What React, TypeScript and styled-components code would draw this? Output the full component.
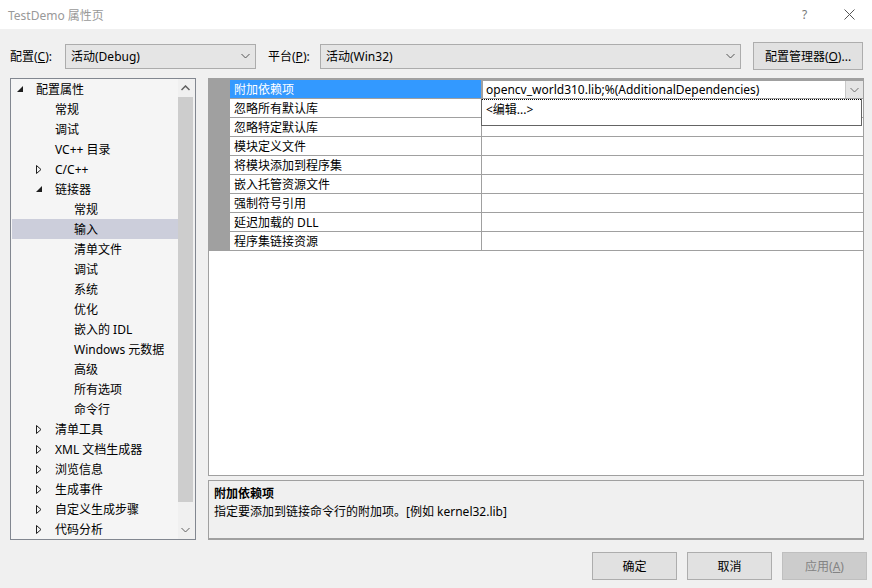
import React from 'react';
import styled, { createGlobalStyle } from 'styled-components';

const GlobalStyle = createGlobalStyle`
  html, body {
    margin: 0;
    padding: 0;
    background: #f0f0f0;
  }
  body {
    font-family: "Noto Sans", "Noto Sans CJK SC", sans-serif;
    font-size: 12px;
    color: #000;
  }
`;

const Window = styled.div`
  width: 872px;
  height: 588px;
  display: flex;
  flex-direction: column;
  background: #f0f0f0;
  overflow: hidden;
`;

const TitleBar = styled.div`
  height: 29px;
  background: #fff;
  display: flex;
  align-items: center;
  padding-left: 8px;
  color: #999;
  font-size: 12px;
`;

const TitleText = styled.div`
  flex: 1;
`;

const TitleButton = styled.div`
  width: 45px;
  height: 29px;
  display: flex;
  align-items: center;
  justify-content: center;
  color: #777;
`;

const Toolbar = styled.div`
  display: flex;
  align-items: center;
  height: 28px;
  margin-top: 13px;
  padding-left: 10px;
`;

const Label = styled.span<{ $width: number }>`
  width: ${({ $width }) => $width}px;
  white-space: nowrap;
`;

const Combo = styled.div<{ $width: number }>`
  width: ${({ $width }) => $width}px;
  height: 25px;
  box-sizing: border-box;
  border: 1px solid #acacac;
  background: #e5e5e5;
  display: flex;
  align-items: center;
  padding: 0 5px;
  margin-right: 12px;
`;

const ComboText = styled.span`
  flex: 1;
`;

const Button = styled.div<{ $width: number; $disabled?: boolean }>`
  width: ${({ $width }) => $width}px;
  height: 28px;
  box-sizing: border-box;
  border: 1px solid ${({ $disabled }) => ($disabled ? '#bfbfbf' : '#adadad')};
  background: ${({ $disabled }) => ($disabled ? '#cccccc' : '#e1e1e1')};
  color: ${({ $disabled }) => ($disabled ? '#838383' : '#000')};
  display: flex;
  align-items: center;
  justify-content: center;
`;

const Main = styled.div`
  display: flex;
  margin-top: 8px;
  height: 462px;
`;

const TreePanel = styled.div`
  width: 186px;
  margin-left: 10px;
  box-sizing: border-box;
  border: 1px solid #828790;
  background: #f5f5f5;
  display: flex;
`;

const TreeList = styled.div`
  flex: 1;
  display: flex;
  flex-direction: column;
`;

const TreeRow = styled.div<{ $level: number; $selected?: boolean }>`
  height: 20px;
  display: flex;
  align-items: center;
  margin-left: 1px;
  padding-left: ${({ $level }) => 5 + $level * 19}px;
  background: ${({ $selected }) => ($selected ? '#cccedb' : 'transparent')};
  white-space: nowrap;
`;

const Expander = styled.span`
  width: 19px;
  height: 20px;
  display: flex;
  align-items: center;
`;

const ScrollBar = styled.div`
  width: 17px;
  background: #f0f0f0;
  display: flex;
  flex-direction: column;
  align-items: flex-start;
`;

const ScrollArrow = styled.div`
  width: 15px;
  height: 18px;
  display: flex;
  align-items: center;
  justify-content: center;
`;

const ScrollTrack = styled.div`
  flex: 1;
  width: 15px;
  display: flex;
  flex-direction: column;
`;

const ScrollThumb = styled.div`
  height: 405px;
  background: #cdcdcd;
`;

const RightColumn = styled.div`
  width: 656px;
  margin-left: 12px;
  display: flex;
  flex-direction: column;
`;

const Grid = styled.div`
  height: 398px;
  box-sizing: border-box;
  border: 1px solid #a0a0a0;
  border-top-width: 2px;
  background: #fff;
  position: relative;
`;

const GridRow = styled.div`
  display: grid;
  grid-template-columns: 21px 252px 1fr;
  height: 19px;
`;

const Gutter = styled.div`
  background: #a0a0a0;
`;

const NameCell = styled.div<{ $selected?: boolean }>`
  box-sizing: border-box;
  border-bottom: 1px solid #a0a0a0;
  border-right: 1px solid #a0a0a0;
  padding-left: 4px;
  display: flex;
  align-items: center;
  background: ${({ $selected }) => ($selected ? '#3399ff' : '#fff')};
  color: ${({ $selected }) => ($selected ? '#fff' : '#000')};
  white-space: nowrap;
`;

const ValueCell = styled.div`
  box-sizing: border-box;
  border-bottom: 1px solid #a0a0a0;
  display: flex;
  align-items: center;
  padding-left: 4px;
  white-space: nowrap;
`;

const EditValue = styled(ValueCell)`
  border: 1px solid #a0a0a0;
  border-right: none;
  padding-left: 3px;
  padding-right: 0;
`;

const DropButton = styled.div`
  width: 17px;
  height: 100%;
  margin-left: auto;
  background: #e5e5e5;
  border-left: 1px solid #c8c8c8;
  display: flex;
  align-items: center;
  justify-content: center;
`;

const DropList = styled.div`
  position: absolute;
  left: 272px;
  top: 19px;
  width: 381px;
  height: 27px;
  box-sizing: border-box;
  background: #fff;
  border: 1px solid #646464;
  border-top: none;
`;

const DropItem = styled.div`
  height: 19px;
  box-sizing: border-box;
  border-top: 1px dotted #000;
  padding-left: 4px;
  display: flex;
  align-items: center;
`;

const Description = styled.div`
  margin-top: 4px;
  height: 60px;
  box-sizing: border-box;
  border: 1px solid #a0a0a0;
  border-bottom: 2px solid #a0a0a0;
  padding: 4px 5px;
`;

const DescTitle = styled.div`
  font-weight: bold;
  line-height: 18px;
`;

const DescText = styled.div`
  line-height: 18px;
`;

const Footer = styled.div`
  display: flex;
  justify-content: flex-end;
  gap: 10px;
  margin-top: 12px;
  padding-right: 5px;
`;

const Chevron = ({ color = '#555' }: { color?: string }) => (
  <svg width="9" height="6" viewBox="0 0 9 6">
    <path d="M0.5 1 L4.5 5 L8.5 1" fill="none" stroke={color} strokeWidth="1" />
  </svg>
);

const Expanded = () => (
  <svg width="7" height="7" viewBox="0 0 7 7">
    <path d="M6 0 L6 6 L0 6 Z" fill="#1e1e1e" />
  </svg>
);

const Collapsed = () => (
  <svg width="6" height="9" viewBox="0 0 6 9">
    <path d="M0.5 0.5 L5 4.5 L0.5 8.5 Z" fill="none" stroke="#1e1e1e" strokeWidth="1" />
  </svg>
);

type Node = { text: string; level: number; state?: 'open' | 'closed'; selected?: boolean };

const tree: Node[] = [
  { text: '配置属性', level: 0, state: 'open' },
  { text: '常规', level: 1 },
  { text: '调试', level: 1 },
  { text: 'VC++ 目录', level: 1 },
  { text: 'C/C++', level: 1, state: 'closed' },
  { text: '链接器', level: 1, state: 'open' },
  { text: '常规', level: 2 },
  { text: '输入', level: 2, selected: true },
  { text: '清单文件', level: 2 },
  { text: '调试', level: 2 },
  { text: '系统', level: 2 },
  { text: '优化', level: 2 },
  { text: '嵌入的 IDL', level: 2 },
  { text: 'Windows 元数据', level: 2 },
  { text: '高级', level: 2 },
  { text: '所有选项', level: 2 },
  { text: '命令行', level: 2 },
  { text: '清单工具', level: 1, state: 'closed' },
  { text: 'XML 文档生成器', level: 1, state: 'closed' },
  { text: '浏览信息', level: 1, state: 'closed' },
  { text: '生成事件', level: 1, state: 'closed' },
  { text: '自定义生成步骤', level: 1, state: 'closed' },
  { text: '代码分析', level: 1, state: 'closed' },
];

const properties = [
  '附加依赖项',
  '忽略所有默认库',
  '忽略特定默认库',
  '模块定义文件',
  '将模块添加到程序集',
  '嵌入托管资源文件',
  '强制符号引用',
  '延迟加载的 DLL',
  '程序集链接资源',
];

export default function App() {
  return (
    <Window>
      <GlobalStyle />
      <TitleBar>
        <TitleText>TestDemo 属性页</TitleText>
        <TitleButton>?</TitleButton>
        <TitleButton>
          <svg width="11" height="11" viewBox="0 0 11 11">
            <path d="M0.5 0.5 L10.5 10.5 M10.5 0.5 L0.5 10.5" stroke="#555" strokeWidth="1" />
          </svg>
        </TitleButton>
      </TitleBar>

      <Toolbar>
        <Label $width={55}>
          配置(<u>C</u>):
        </Label>
        <Combo $width={191}>
          <ComboText>活动(Debug)</ComboText>
          <Chevron />
        </Combo>
        <Label $width={52}>
          平台(<u>P</u>):
        </Label>
        <Combo $width={421}>
          <ComboText>活动(Win32)</ComboText>
          <Chevron />
        </Combo>
        <Button $width={110}>
          配置管理器(<u>O</u>)...
        </Button>
      </Toolbar>

      <Main>
        <TreePanel>
          <TreeList>
            {tree.map((n, i) => (
              <TreeRow key={i} $level={n.level} $selected={n.selected}>
                <Expander>
                  {n.state === 'open' && <Expanded />}
                  {n.state === 'closed' && <Collapsed />}
                </Expander>
                {n.text}
              </TreeRow>
            ))}
          </TreeList>
          <ScrollBar>
            <ScrollArrow>
              <svg width="9" height="6" viewBox="0 0 9 6">
                <path d="M0.5 5 L4.5 1 L8.5 5" fill="none" stroke="#606060" strokeWidth="1.5" />
              </svg>
            </ScrollArrow>
            <ScrollTrack>
              <ScrollThumb />
            </ScrollTrack>
            <ScrollArrow>
              <Chevron color="#606060" />
            </ScrollArrow>
          </ScrollBar>
        </TreePanel>

        <RightColumn>
          <Grid>
            {properties.map((p, i) => (
              <GridRow key={p}>
                <Gutter />
                <NameCell $selected={i === 0}>{p}</NameCell>
                {i === 0 ? (
                  <EditValue>
                    opencv_world310.lib;%(AdditionalDependencies)
                    <DropButton>
                      <Chevron color="#707070" />
                    </DropButton>
                  </EditValue>
                ) : (
                  <ValueCell />
                )}
              </GridRow>
            ))}
            <DropList>
              <DropItem>&lt;编辑...&gt;</DropItem>
            </DropList>
          </Grid>
          <Description>
            <DescTitle>附加依赖项</DescTitle>
            <DescText>指定要添加到链接命令行的附加项。[例如 kernel32.lib]</DescText>
          </Description>
        </RightColumn>
      </Main>

      <Footer>
        <Button $width={85}>确定</Button>
        <Button $width={85}>取消</Button>
        <Button $width={85} $disabled>
          应用(<u>A</u>)
        </Button>
      </Footer>
    </Window>
  );
}
